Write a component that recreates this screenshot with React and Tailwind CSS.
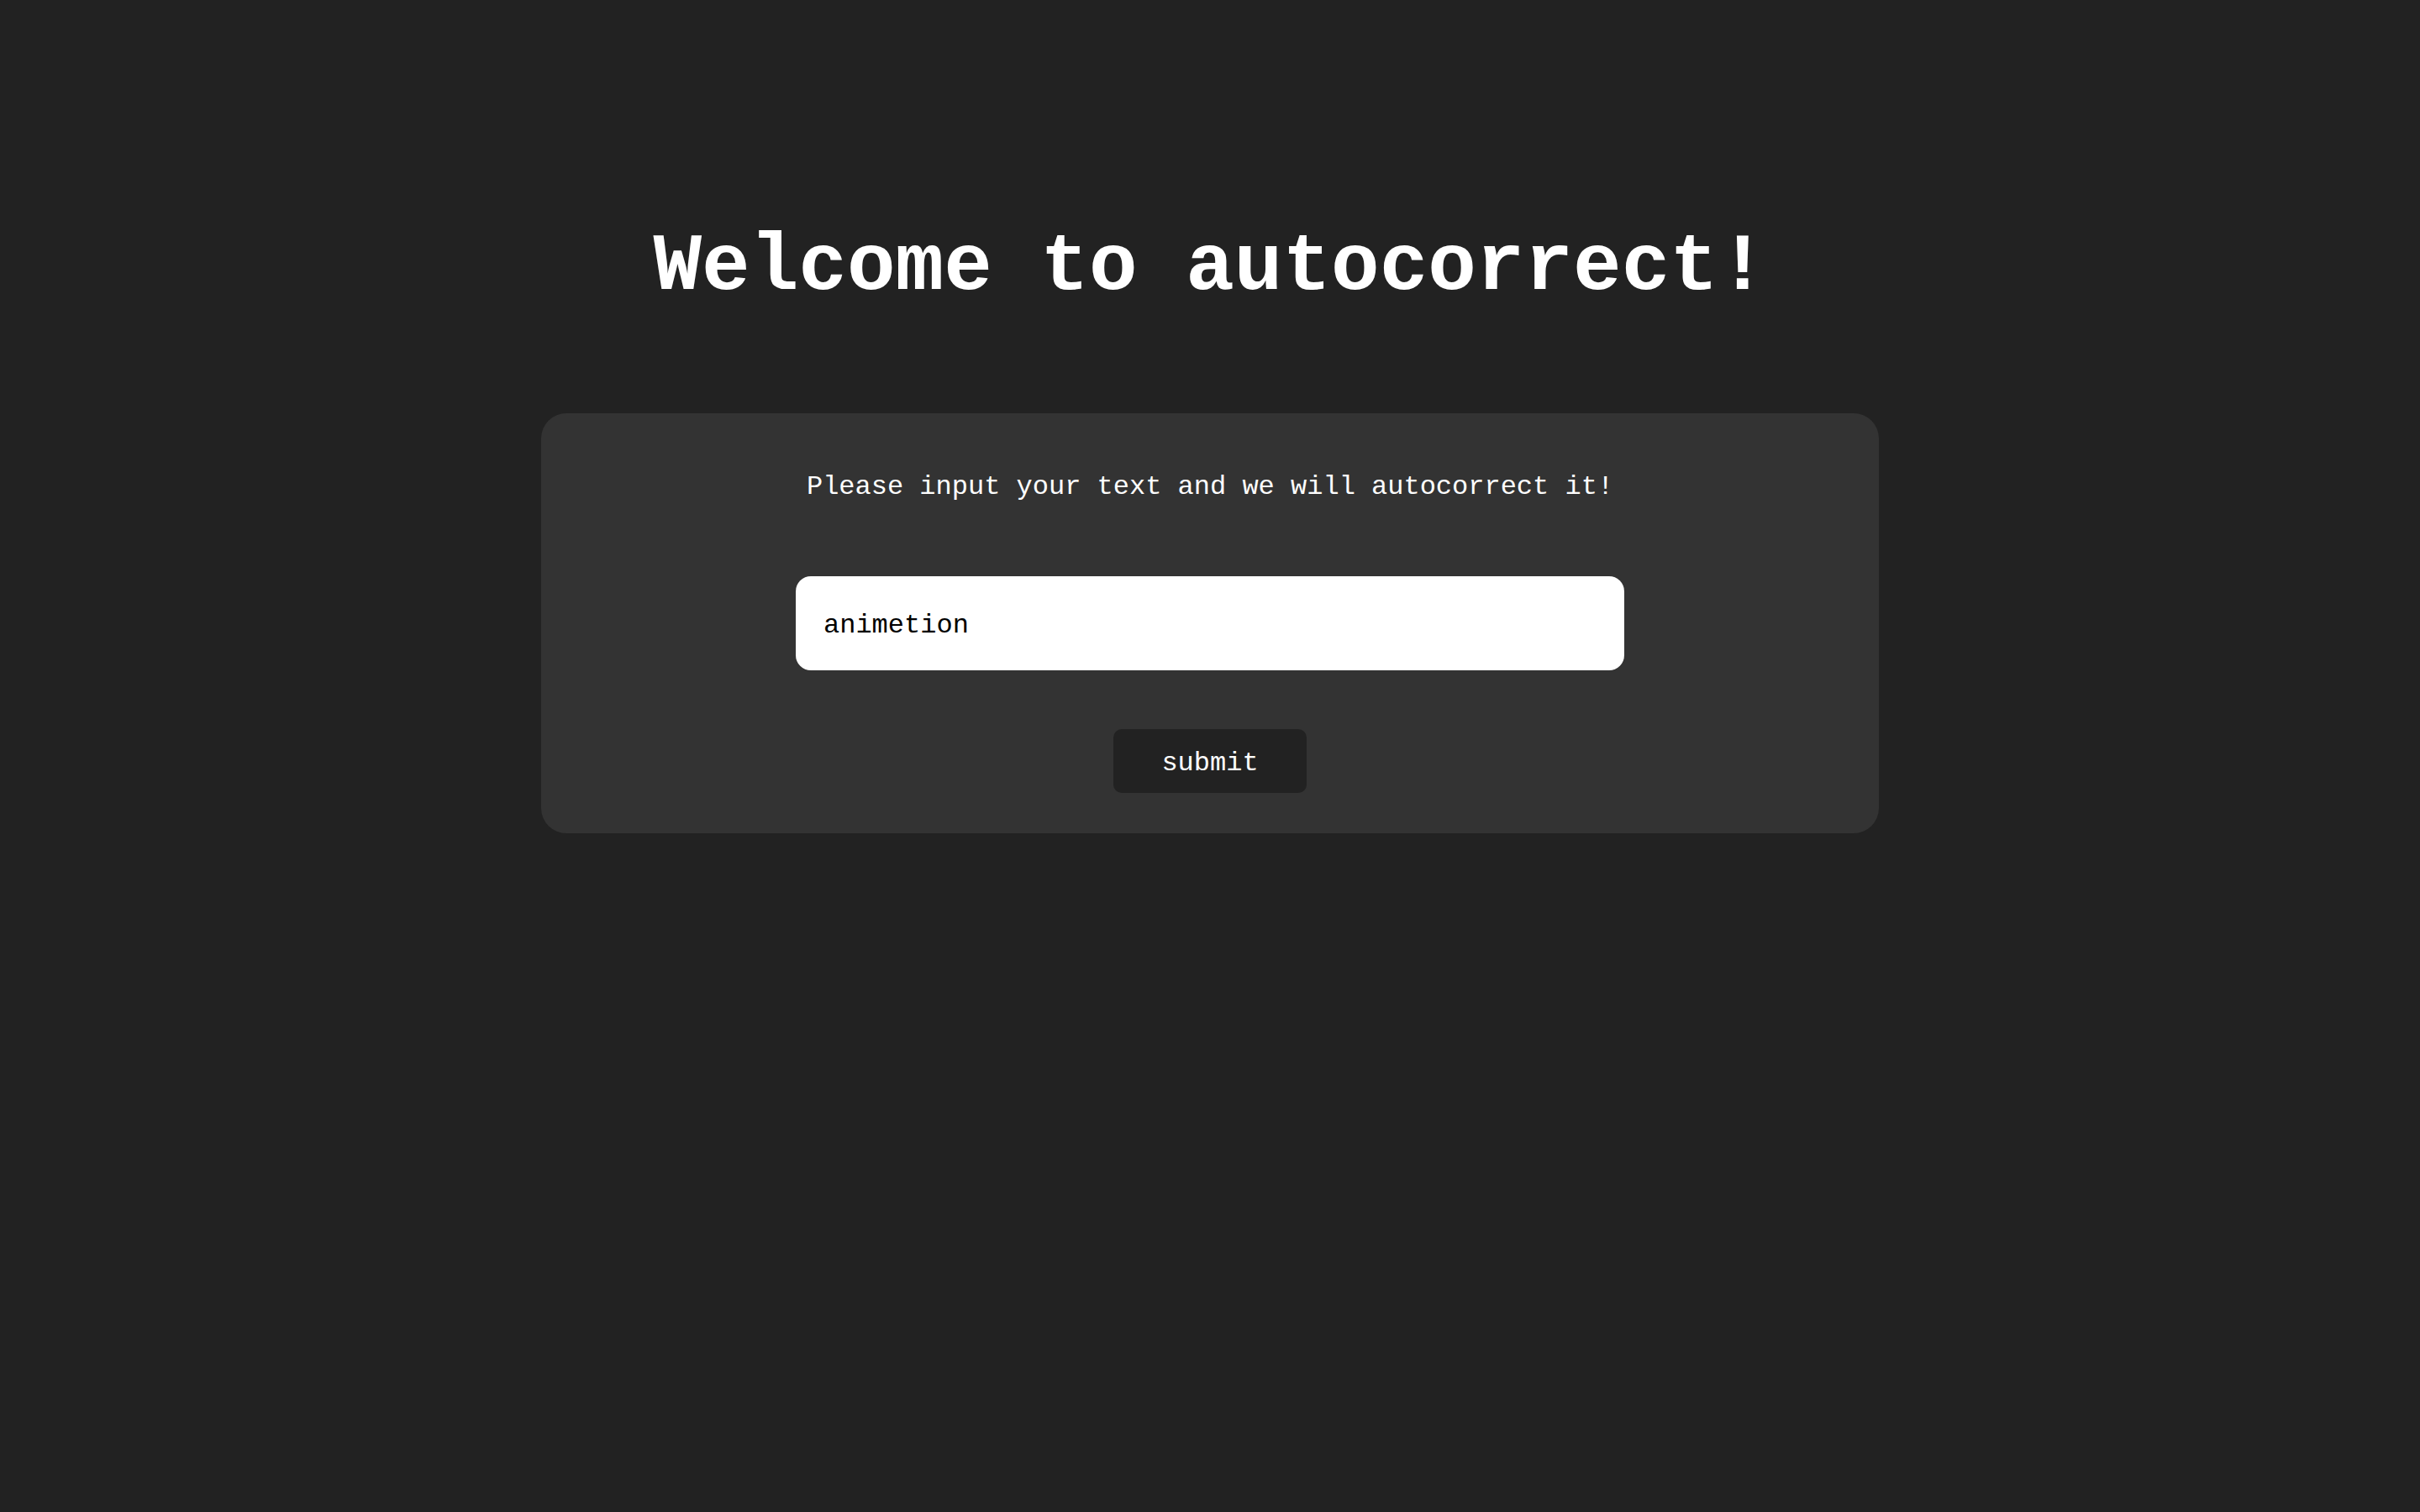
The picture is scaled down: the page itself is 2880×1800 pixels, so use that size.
import React from "react";

export default function App() {
  return (
    <div className="min-h-[1800px] w-full bg-[#222222] font-['Liberation_Mono','Courier_New',monospace] flex flex-col items-center">
      <h1 className="mt-[264px] text-[96px] leading-[109px] font-bold text-white whitespace-nowrap">
        Welcome to autocorrect!
      </h1>
      <div className="mt-[119px] w-[1592px] h-[500px] rounded-[30px] bg-[#333333] flex flex-col items-center pt-[70px]">
        <p className="text-[32px] leading-[36px] text-white whitespace-nowrap">
          Please input your text and we will autocorrect it!
        </p>
        <div className="mt-[88px] w-[986px] h-[112px] rounded-[18px] bg-white flex items-center px-[33px] pt-[5px]">
          <span className="text-[32px] leading-[36px] text-black">animetion</span>
        </div>
        <button className="mt-[70px] w-[230px] h-[76px] rounded-[10px] bg-[#222222] text-white text-[32px] leading-[36px] flex items-center justify-center pt-[5px] font-['Liberation_Mono','Courier_New',monospace]">
          submit
        </button>
      </div>
    </div>
  );
}
